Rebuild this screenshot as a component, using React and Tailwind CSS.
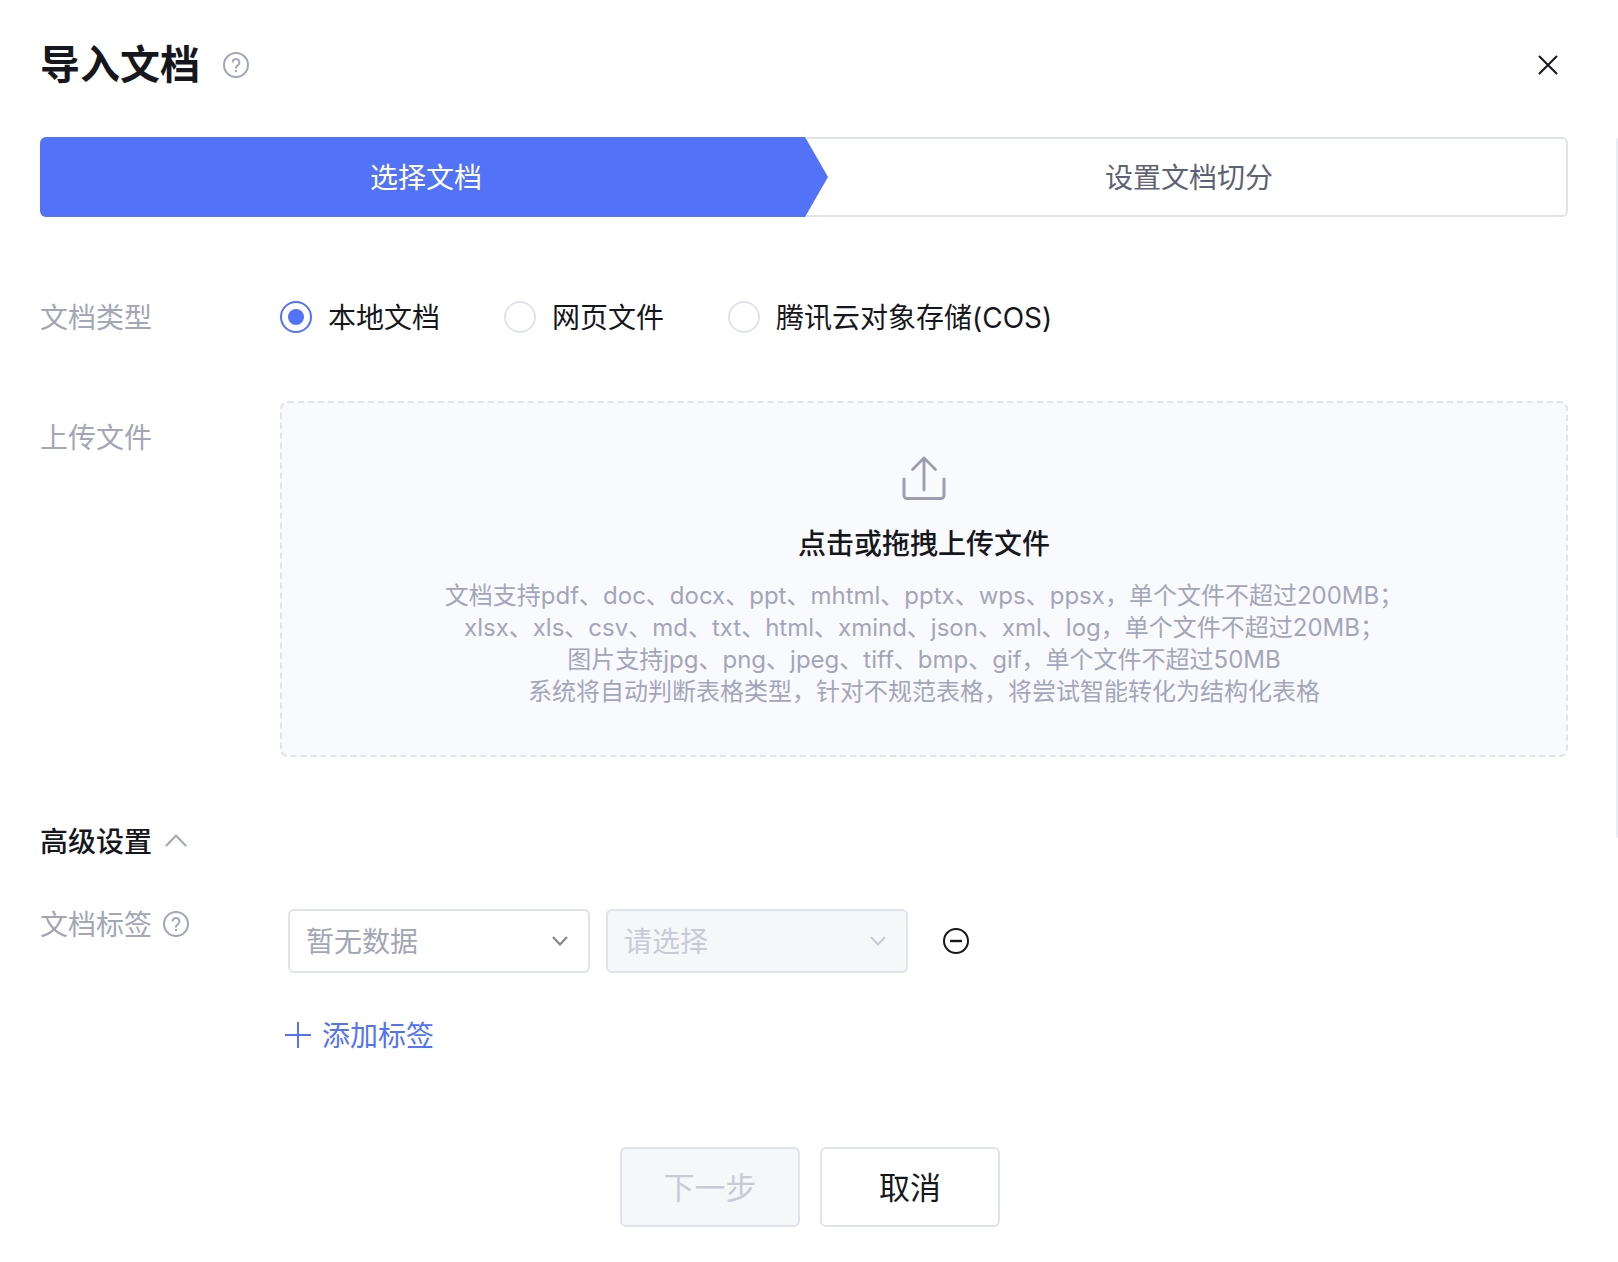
import React from "react";

const fontClass = "font-['Inter','Noto_Sans_CJK_SC',sans-serif]";

const HelpIcon = ({ className }) => (
  <svg viewBox="0 0 26 26" fill="none" className={className}>
    <circle cx="13" cy="13" r="12" stroke="#a3a6b5" strokeWidth="2" />
    <path d="M9.6 10.4a3.4 3.4 0 1 1 5.2 2.9c-1.2.7-1.8 1.4-1.8 2.7v.4" stroke="#a3a6b5" strokeWidth="2" />
    <rect x="12" y="18" width="2" height="2.2" fill="#a3a6b5" />
  </svg>
);

const Radio = ({ checked, label }) => (
  <div className="flex items-center">
    <span
      className={`flex w-8 h-8 items-center justify-center rounded-full border-2 ${
        checked ? "border-[#5272f7]" : "border-[#e1e3ea]"
      }`}
    >
      {checked && <span className="w-4 h-4 rounded-full bg-[#5272f7]" />}
    </span>
    <span className="ml-4 pt-[2px] text-[28px] leading-10 text-[#16171c]">{label}</span>
  </div>
);

const Chevron = ({ color }) => (
  <svg viewBox="0 0 16 10" fill="none" className="w-4 h-[10px]">
    <path d="M1 1l7 7.5L15 1" stroke={color} strokeWidth="2" />
  </svg>
);

const Select = ({ text, disabled }) => (
  <div
    className={`flex w-[302px] h-16 items-center justify-between rounded-md border-2 border-[#e1e3ea] pl-4 pr-[20px] ${
      disabled ? "bg-[#f6f7f9]" : "bg-white"
    }`}
  >
    <span className={`pt-[2px] text-[28px] ${disabled ? "text-[#c9cbd4]" : "text-[#a3a6b5]"}`}>{text}</span>
    <Chevron color={disabled ? "#c9cbd4" : "#7f8291"} />
  </div>
);

export default function App() {
  return (
    <div className={`relative min-h-[1262px] bg-white pl-10 pr-[50px] pt-10 ${fontClass}`}>
      {/* Scrollbar thumb */}
      <div className="absolute right-0 top-[138px] h-[700px] w-[2px] rounded-full bg-[#e9eef6]" />

      {/* Header */}
      <div className="flex h-[50px] items-center justify-between">
        <div className="flex items-center">
          <h1 className="text-[40px] font-semibold leading-[50px] text-[#16171c]">导入文档</h1>
          <HelpIcon className="ml-[23px] w-[26px] h-[26px]" />
        </div>
        <svg viewBox="0 0 20 20" fill="none" className="mr-[10px] w-5 h-5">
          <path d="M1 1l18 18M19 1L1 19" stroke="#16171c" strokeWidth="2" />
        </svg>
      </div>

      {/* Steps */}
      <div className="mt-[47px] flex h-20">
        <div className="relative z-10 flex w-[788px] shrink-0 items-center justify-center rounded-l-md bg-[#5272f7] pr-4 pt-[2px] text-[28px] text-white [clip-path:polygon(0_0,765px_0,100%_50%,765px_100%,0_100%)]">
          选择文档
        </div>
        <div className="-ml-[24px] flex flex-1 items-center justify-center rounded-r-md border-2 border-[#e1e3ea] pl-[6px] pt-[2px] text-[28px] text-[#5f6272]">
          设置文档切分
        </div>
      </div>

      {/* Document type */}
      <div className="mt-[84px] flex h-8 items-center">
        <div className="w-[240px] pt-[2px] text-[28px] text-[#a3a6b5]">文档类型</div>
        <div className="flex items-center gap-[64px]">
          <Radio checked label="本地文档" />
          <Radio label="网页文件" />
          <Radio label="腾讯云对象存储(COS)" />
        </div>
      </div>

      {/* Upload */}
      <div className="mt-[68px] flex items-start">
        <div className="w-[240px] pt-[17px] text-[28px] leading-10 text-[#a3a6b5]">上传文件</div>
        <div className="flex h-[356px] flex-1 flex-col items-center rounded-lg border-2 border-dashed border-[#e1e3ea] bg-[#f9fafe] pt-[53px]">
          <svg viewBox="0 0 44 44" fill="none" className="w-11 h-11">
            <path d="M22 34V2M10.500 13.500L22 2l11.500 11.500" stroke="#9a9dae" strokeWidth="2.8" strokeLinecap="round" strokeLinejoin="round" />
            <path d="M2 23v16.500a3 3 0 0 0 3 3h34a3 3 0 0 0 3-3V23" stroke="#9a9dae" strokeWidth="3" strokeLinecap="round" />
          </svg>
          <div className="mt-6 text-[28px] font-medium leading-10 text-[#16171c]">点击或拖拽上传文件</div>
          <div className="mt-4 text-center text-[24px] leading-8 text-[#a3a6b8]">
            <div>文档支持pdf、doc、docx、ppt、mhtml、pptx、wps、ppsx，单个文件不超过200MB；</div>
            <div>xlsx、xls、csv、md、txt、html、xmind、json、xml、log，单个文件不超过20MB；</div>
            <div>图片支持jpg、png、jpeg、tiff、bmp、gif，单个文件不超过50MB</div>
            <div>系统将自动判断表格类型，针对不规范表格，将尝试智能转化为结构化表格</div>
          </div>
        </div>
      </div>

      {/* Advanced */}
      <div className="mt-[64px] flex h-10 items-center">
        <span className="pt-[2px] text-[28px] font-medium text-[#16171c]">高级设置</span>
        <svg viewBox="0 0 22 13" fill="none" className="ml-[13px] mb-[2px] w-[22px] h-[13px]">
          <path d="M1 12L11 1.500 21 12" stroke="#a3a6b5" strokeWidth="2" />
        </svg>
      </div>

      {/* Tags */}
      <div className="mt-11 flex items-start">
        <div className="flex w-[248px] items-center">
          <span className="text-[28px] leading-10 text-[#a3a6b5]">文档标签</span>
          <HelpIcon className="ml-[11px] -mt-[2px] w-[26px] h-[26px]" />
        </div>
        <div className="mt-1 flex items-center gap-4">
          <Select text="暂无数据" />
          <Select text="请选择" disabled />
          <svg viewBox="0 0 26 26" fill="none" className="ml-[19px] w-[26px] h-[26px]">
            <circle cx="13" cy="13" r="12" stroke="#16171c" strokeWidth="2" />
            <path d="M7 13h12" stroke="#16171c" strokeWidth="2.4" />
          </svg>
        </div>
      </div>

      <div className="mt-[42px] ml-[244px] flex h-10 items-center text-[#5272f7]">
        <svg viewBox="0 0 28 28" fill="none" className="w-7 h-7">
          <path d="M14 1v26M1 14h26" stroke="#5272f7" strokeWidth="2" />
        </svg>
        <span className="ml-[10px] pt-[2px] text-[28px]">添加标签</span>
      </div>

      {/* Footer */}
      <div className="mt-[92px] -mr-[12px] flex justify-center gap-5">
        <div className="flex w-[180px] h-20 items-center justify-center rounded-md border-2 border-[#e1e3ea] bg-[#f6f7f9] pt-[2px] text-[31px] text-[#c9cbd4]">
          下一步
        </div>
        <div className="flex w-[180px] h-20 items-center justify-center rounded-md border-2 border-[#e1e3ea] bg-white pt-[2px] text-[31px] text-[#16171c]">
          取消
        </div>
      </div>
    </div>
  );
}
